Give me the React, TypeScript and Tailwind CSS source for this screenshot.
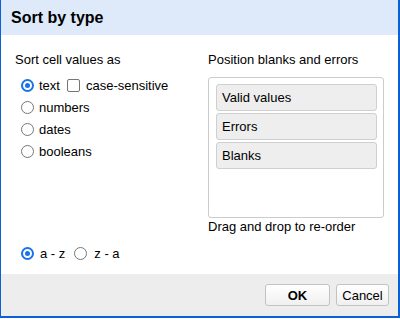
import React, { useState } from "react";

//=============== SMALL CONTROLS ===============//
function Radio({ checked }: { checked: boolean }) {
  return checked ? (
    <span className="w-[13px] h-[13px] shrink-0 rounded-full border-2 border-[#1a73e8] bg-white flex items-center justify-center">
      <span className="w-[5px] h-[5px] rounded-full bg-[#1a73e8]" />
    </span>
  ) : (
    <span className="w-[13px] h-[13px] shrink-0 rounded-full border border-[#767676] bg-white" />
  );
}

const sortTypes = ["text", "numbers", "dates", "booleans"];
const blankOrder = ["Valid values", "Errors", "Blanks"];

//=============== SORT BY TYPE DIALOG ===============//
export default function App() {
  const [sortType, setSortType] = useState<string>("text");
  const [ascending, setAscending] = useState<boolean>(true);
  const [caseSensitive, setCaseSensitive] = useState<boolean>(false);

  return (
    <div className="w-[400px] h-[318px] flex flex-col bg-white border-l border-r-2 border-b-2 border-[#0b61d3] text-[13px] leading-[15px] text-black font-['Liberation_Sans',Arial,sans-serif]">
      {/*========= HEADER =========*/}
      <div className="h-[35px] shrink-0 flex items-center pl-[10px] bg-[#dee9fa] text-[16px] font-bold">
        Sort by type
      </div>

      {/*========= BODY =========*/}
      <div className="h-[239px] shrink-0 flex flex-col">
        <div className="h-[207px] flex">
          {/* Sort cell values */}
          <div className="w-[207px] pl-[14px] pt-[17px]">
            <div>Sort cell values as</div>
            <div className="mt-[7px]">
              {sortTypes.map((type) => (
                <div key={type} className="h-[22px] flex items-center pl-[6px]">
                  <div className="flex items-center cursor-pointer" onClick={() => setSortType(type)}>
                    <Radio checked={sortType === type} />
                    <span className="ml-[5px]">{type}</span>
                  </div>
                  {type === "text" && (
                    <div
                      className="flex items-center ml-[7px] cursor-pointer"
                      onClick={() => setCaseSensitive((prev) => !prev)}
                    >
                      <span
                        className={`w-[13px] h-[13px] shrink-0 rounded-[2px] border ${
                          caseSensitive ? "border-[#1a73e8] bg-[#1a73e8]" : "border-[#767676] bg-white"
                        }`}
                      />
                      <span className="ml-[6px]">case-sensitive</span>
                    </div>
                  )}
                </div>
              ))}
            </div>
          </div>

          {/* Position blanks and errors */}
          <div className="pt-[17px]">
            <div>Position blanks and errors</div>
            <div className="mt-[10px] w-[176px] h-[141px] rounded-[3px] border border-[#cccccc] pt-[6px] pl-[7px] flex flex-col gap-[2px]">
              {blankOrder.map((item) => (
                <div
                  key={item}
                  className="w-[161px] h-[27px] flex items-center pl-[5px] rounded-[3px] border border-[#cfcfcf] bg-[#eeeeee]"
                >
                  {item}
                </div>
              ))}
            </div>
            <div className="mt-px">Drag and drop to re-order</div>
          </div>
        </div>

        {/* Direction */}
        <div className="h-[22px] flex items-center pl-[20px]">
          <div className="flex items-center cursor-pointer" onClick={() => setAscending(true)}>
            <Radio checked={ascending} />
            <span className="ml-[6px]">a - z</span>
          </div>
          <div className="flex items-center ml-[9px] cursor-pointer" onClick={() => setAscending(false)}>
            <Radio checked={!ascending} />
            <span className="ml-[7px]">z - a</span>
          </div>
        </div>
      </div>

      {/*========= FOOTER =========*/}
      <div className="flex-1 flex items-center justify-end gap-[6px] pr-[9px] bg-[#ededed]">
        <button className="w-[65px] h-[22px] rounded-[3px] border border-[#c2c2c2] bg-gradient-to-b from-white to-[#f0f0f0] font-bold">
          OK
        </button>
        <button className="w-[53px] h-[22px] rounded-[3px] border border-[#c2c2c2] bg-gradient-to-b from-white to-[#f0f0f0]">
          Cancel
        </button>
      </div>
    </div>
  );
}
